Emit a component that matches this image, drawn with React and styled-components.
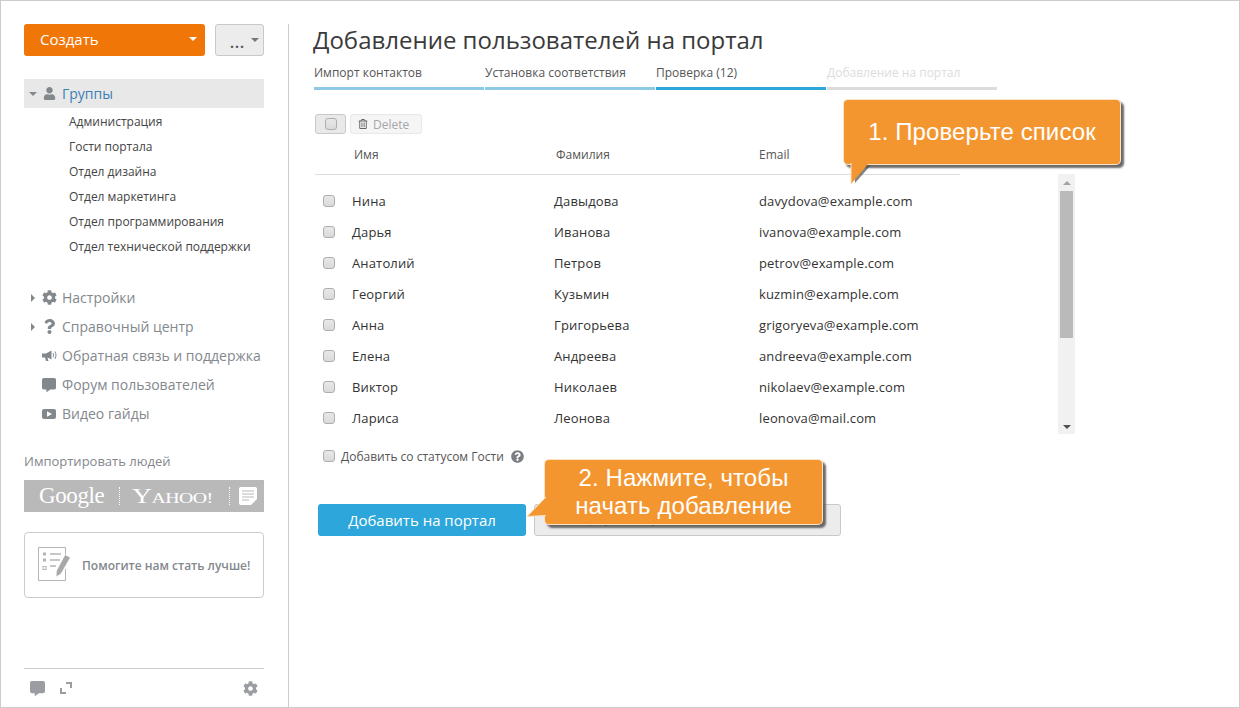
import React from "react";
import styled, { createGlobalStyle } from "styled-components";
import { FaUser, FaCog, FaQuestion, FaCommentAlt, FaQuestionCircle, FaRegTrashAlt } from "react-icons/fa";

const GlobalStyle = createGlobalStyle`
  html, body {
    margin: 0;
    padding: 0;
    background: #fff;
  }
  body {
    font-family: "Open Sans", "Liberation Sans", sans-serif;
    color: #333;
  }
  * { box-sizing: border-box; }
`;

const Page = styled.div`
  position: relative;
  display: flex;
  width: 1240px;
  height: 708px;
  overflow: hidden;
  border: 1px solid #ccc;
  background: #fff;
`;

const Sidebar = styled.aside`
  display: flex;
  flex-direction: column;
  flex: none;
  width: 288px;
  margin-top: 23px;
  padding: 0 24px 0 23px;
  border-right: 1px solid #ccc;
`;

const ButtonRow = styled.div`
  display: flex;
  justify-content: space-between;
`;

const CreateButton = styled.div`
  display: flex;
  align-items: center;
  justify-content: space-between;
  width: 181px;
  height: 32px;
  padding: 0 8px 2px 16px;
  border-radius: 3px;
  background: #f07608;
  color: #fff;
  font-size: 15px;
`;

const Caret = styled.span`
  width: 0;
  height: 0;
  border-left: 4px solid transparent;
  border-right: 4px solid transparent;
  border-top: 4px solid ${(p) => p.$color || "#fff"};
`;

const MoreButton = styled.div`
  display: flex;
  align-items: center;
  justify-content: flex-end;
  gap: 6px;
  width: 49px;
  height: 32px;
  padding-right: 4px;
  border: 1px solid #c9c9c9;
  border-radius: 3px;
  background: #ececec;
  color: #555;
  font-size: 14px;
  font-weight: 700;
  letter-spacing: 1px;
`;

const Dots = styled.span`
  position: relative;
  top: 2px;
`;

const GroupHeader = styled.div`
  display: flex;
  align-items: center;
  height: 29px;
  margin-top: 23px;
  padding-left: 5px;
  background: #e8e8e8;
  color: #3b7fb5;
  font-size: 14px;
`;

const Arrow = styled.span`
  flex: none;
  width: 0;
  height: 0;
  ${(p) =>
    p.$open
      ? `border-left: 4px solid transparent;
         border-right: 4px solid transparent;
         border-top: 4px solid #83888d;
         margin-right: 4px;`
      : `border-top: 4px solid transparent;
         border-bottom: 4px solid transparent;
         border-left: 4px solid #83888d;`}
`;

const IconSlot = styled.span`
  display: flex;
  align-items: center;
  justify-content: center;
  flex: none;
  width: 16px;
  margin-right: 5px;
  color: #83888d;
  font-size: 15px;
`;

const SubList = styled.div`
  margin-top: 1px;
`;

const SubItem = styled.div`
  height: 25px;
  padding-left: 45px;
  color: #444;
  font-size: 12px;
  line-height: 25px;
`;

const Nav = styled.div`
  margin-top: 24px;
`;

const NavItem = styled.div`
  display: flex;
  align-items: center;
  height: 29px;
  color: #83888d;
  font-size: 14px;
  white-space: nowrap;
`;

const ArrowSlot = styled.span`
  display: flex;
  align-items: center;
  flex: none;
  width: 17px;
  padding-left: 7px;
`;

const ImportLabel = styled.div`
  margin-top: 25px;
  color: #83888d;
  font-size: 13px;
  line-height: 16px;
`;

const ImportBar = styled.div`
  display: flex;
  align-items: center;
  width: 240px;
  height: 32px;
  margin-top: 11px;
  padding-left: 15px;
  background: #b9b9b9;
  color: #fff;
`;

const GoogleMark = styled.span`
  width: 66px;
  font-family: "Liberation Serif", serif;
  font-size: 23px;
  letter-spacing: -0.4px;
`;

const YahooMark = styled.span`
  width: 97px;
  margin-left: 12px;
  font-family: "Liberation Serif", serif;
  font-size: 15px;
  letter-spacing: -0.4px;
  white-space: nowrap;
  transform: scaleX(1.32);
  transform-origin: left center;
`;

const BigLetter = styled.span`
  font-size: 21px;
`;

const DotLine = styled.span`
  flex: none;
  width: 1px;
  height: 18px;
  margin-left: ${(p) => p.$left}px;
  border-left: 1px dotted #fff;
`;

const NotesSlot = styled.span`
  display: flex;
  margin-left: 9px;
`;

const FeedbackCard = styled.div`
  display: flex;
  align-items: center;
  width: 240px;
  height: 66px;
  margin-top: 20px;
  padding-left: 13px;
  border: 1px solid #ccc;
  border-radius: 4px;
  color: #83888d;
  font-size: 12px;
  font-weight: 600;
  white-space: nowrap;
`;

const CardIcon = styled.svg`
  flex: none;
  width: 33px;
  height: 36px;
  margin-right: 11px;
`;

const SidebarFooter = styled.div`
  display: flex;
  align-items: center;
  height: 39px;
  margin-top: auto;
  padding: 0 6px;
  border-top: 1px solid #ccc;
  color: #9a9ea3;
`;

const FooterIcon = styled.span`
  display: flex;
  width: ${(p) => p.$width}px;
  font-size: 15px;
`;

const Spacer = styled.span`
  flex: 1;
`;

const Main = styled.main`
  flex: 1;
  padding: 23px 0 0 24px;
`;

const Title = styled.h1`
  margin: 0;
  color: #3a3a3a;
  font-size: 24px;
  font-weight: 400;
  line-height: 32px;
`;

const Steps = styled.div`
  display: flex;
  gap: 1px;
  margin: 9px 0 0 1px;
`;

const Step = styled.div`
  width: 170px;
  padding-bottom: 6px;
  border-bottom: 3px solid ${(p) => p.$bar};
  color: ${(p) => p.$color};
  font-size: 12px;
  line-height: 16px;
`;

const Toolbar = styled.div`
  display: flex;
  gap: 4px;
  margin: 24px 0 0 2px;
`;

const SelectButton = styled.div`
  display: flex;
  align-items: center;
  justify-content: center;
  width: 31px;
  height: 20px;
  border: 1px solid #c9c9c9;
  border-radius: 3px;
  background: #e9e9e9;
`;

const DeleteButton = styled.div`
  display: flex;
  align-items: center;
  gap: 5px;
  width: 72px;
  height: 20px;
  padding-left: 7px;
  border: 1px solid #e8e8e8;
  border-radius: 3px;
  background: #f5f5f5;
  color: #a6a6a6;
  font-size: 12px;
`;

const Box = styled.span`
  display: block;
  flex: none;
  width: 12px;
  height: 12px;
  border: 1px solid #aeaeae;
  border-radius: 3px;
  background: linear-gradient(#e8e8e8, #dadada);
`;

const TableHead = styled.div`
  display: grid;
  grid-template-columns: 202px 203px 1fr;
  align-items: center;
  width: 645px;
  height: 41px;
  margin-left: 2px;
  padding: 0 0 0 39px;
  border-bottom: 1px solid #ddd;
  color: #555;
  font-size: 12px;
`;

const TableBody = styled.div`
  display: flex;
  justify-content: space-between;
  width: 760px;
  margin-left: 2px;
`;

const Rows = styled.div`
  width: 645px;
  padding-top: 10px;
`;

const Row = styled.div`
  display: grid;
  grid-template-columns: 29px 202px 205px 1fr;
  align-items: center;
  height: 31px;
  padding-left: 8px;
  color: #333;
  font-size: 13px;
  letter-spacing: 0.15px;
`;

const Scrollbar = styled.div`
  display: flex;
  flex-direction: column;
  align-items: center;
  justify-content: space-between;
  width: 17px;
  height: 260px;
  margin-top: -1px;
  padding: 7px 0 5px;
  background: #f1f1f1;
  position: relative;
`;

const ScrollArrow = styled.span`
  width: 0;
  height: 0;
  border-left: 4px solid transparent;
  border-right: 4px solid transparent;
  ${(p) => (p.$down ? "border-top: 4px solid #505050;" : "border-bottom: 4px solid #a3a3a3;")}
`;

const ScrollThumb = styled.span`
  position: absolute;
  top: 17px;
  left: 2px;
  width: 13px;
  height: 147px;
  background: #bababa;
`;

const GuestRow = styled.div`
  display: flex;
  align-items: center;
  height: 16px;
  margin: 14px 0 0 10px;
  color: #555;
  font-size: 12px;
`;

const GuestLabel = styled.span`
  margin: 0 7px 0 6px;
`;

const HelpIcon = styled.span`
  display: flex;
  color: #7b7f84;
  font-size: 13px;
`;

const Actions = styled.div`
  display: flex;
  gap: 8px;
  margin: 40px 0 0 5px;
`;

const ActionButton = styled.div`
  display: flex;
  align-items: center;
  justify-content: center;
  width: ${(p) => p.$width}px;
  height: 32px;
  border-radius: 3px;
  ${(p) =>
    p.$primary
      ? "background: #2da7db; color: #fff; font-size: 15px;"
      : "background: #ececec; color: #444; border: 1px solid #c9c9c9; font-size: 13px; padding-bottom: 5px;"}
`;

const Callout = styled.div`
  position: absolute;
  left: ${(p) => p.$left}px;
  top: ${(p) => p.$top}px;
  width: ${(p) => p.$width}px;
  height: ${(p) => p.$height}px;
  display: flex;
  align-items: center;
  justify-content: center;
  border-radius: 4px;
  background: #f49630;
  color: #fff;
  font-family: "Liberation Sans", Arial, sans-serif;
  font-size: 24px;
  line-height: 28px;
  letter-spacing: 0.1px;
  text-align: center;
  box-shadow: 0 0 0 1px #fde3c5, 3px 3px 2px 1px rgba(80, 80, 80, 0.85);
`;

const CalloutTail = styled.svg`
  position: absolute;
  left: ${(p) => p.$left}px;
  top: ${(p) => p.$top}px;
  overflow: visible;
`;

const steps = [
  { label: "Импорт контактов", bar: "#8ecae6", color: "#555" },
  { label: "Установка соответствия", bar: "#8ecae6", color: "#555" },
  { label: "Проверка (12)", bar: "#2da7db", color: "#555" },
  { label: "Добавление на портал", bar: "#dcdcdc", color: "#dcdcdc" },
];

const groups = [
  "Администрация",
  "Гости портала",
  "Отдел дизайна",
  "Отдел маркетинга",
  "Отдел программирования",
  "Отдел технической поддержки",
];

const people = [
  ["Нина", "Давыдова", "davydova@example.com"],
  ["Дарья", "Иванова", "ivanova@example.com"],
  ["Анатолий", "Петров", "petrov@example.com"],
  ["Георгий", "Кузьмин", "kuzmin@example.com"],
  ["Анна", "Григорьева", "grigoryeva@example.com"],
  ["Елена", "Андреева", "andreeva@example.com"],
  ["Виктор", "Николаев", "nikolaev@example.com"],
  ["Лариса", "Леонова", "leonova@mail.com"],
];

const VideoIcon = () => (
  <svg width="14" height="12" viewBox="0 0 14 12">
    <rect y="1" width="14" height="10" rx="2" fill="#83888d" />
    <path d="M5 3.2 10 6 5 8.8z" fill="#fff" />
  </svg>
);

const HornIcon = () => (
  <svg width="15" height="13" viewBox="0 0 15 13">
    <path d="M0 4.5h4L9.5 1.5v9L5.5 8.6l1 3.4H4L3 8.5H0z" fill="#83888d" />
    <path d="M11 4c.8 1.4.8 3 0 4.4M13 2.5c1.3 2.3 1.3 5 0 7.4" fill="none" stroke="#83888d" />
  </svg>
);

const NotesIcon = () => (
  <svg width="18" height="18" viewBox="0 0 18 18">
    <path d="M2 0h14a2 2 0 0 1 2 2v10l-6 6H2a2 2 0 0 1-2-2V2a2 2 0 0 1 2-2z" fill="#fff" />
    <path d="M3 4h12M3 7h12M3 10h12M3 13h7" stroke="#b9b9b9" strokeWidth="1.2" />
  </svg>
);

const ExpandIcon = () => (
  <svg width="12" height="12" viewBox="0 0 12 12" fill="none" stroke="#9a9ea3" strokeWidth="2">
    <path d="M6 1h5v5M1 6v5h5" />
  </svg>
);

const Checklist = () => (
  <CardIcon viewBox="0 0 33 36" fill="none" stroke="#b5b5b5">
    <path d="M27.5 9V.5H.5v33h27V22" />
    <path d="M5 7h3M5 13h3" strokeWidth="3" />
    <rect x="5" y="19.5" width="3" height="3" />
    <path d="M12 7h11M12 13h10M12 19h6" strokeWidth="1.5" />
    <path d="M27 7.5l5.5 3L23 27l-5 3 .3-6z" fill="#a8a8a8" stroke="#fff" strokeWidth="0.8" />
  </CardIcon>
);

const App = () => (
  <>
    <GlobalStyle />
    <Page>
      <Sidebar>
        <ButtonRow>
          <CreateButton>
            Создать
            <Caret />
          </CreateButton>
          <MoreButton>
            <Dots>...</Dots>
            <Caret $color="#777" />
          </MoreButton>
        </ButtonRow>
        <GroupHeader>
          <Arrow $open />
          <IconSlot>
            <FaUser size={13} />
          </IconSlot>
          Группы
        </GroupHeader>
        <SubList>
          {groups.map((g) => (
            <SubItem key={g}>{g}</SubItem>
          ))}
        </SubList>
        <Nav>
          <NavItem>
            <ArrowSlot><Arrow /></ArrowSlot>
            <IconSlot><FaCog /></IconSlot>
            Настройки
          </NavItem>
          <NavItem>
            <ArrowSlot><Arrow /></ArrowSlot>
            <IconSlot><FaQuestion /></IconSlot>
            Справочный центр
          </NavItem>
          <NavItem>
            <ArrowSlot />
            <IconSlot><HornIcon /></IconSlot>
            Обратная связь и поддержка
          </NavItem>
          <NavItem>
            <ArrowSlot />
            <IconSlot><FaCommentAlt size={14} /></IconSlot>
            Форум пользователей
          </NavItem>
          <NavItem>
            <ArrowSlot />
            <IconSlot><VideoIcon /></IconSlot>
            Видео гайды
          </NavItem>
        </Nav>
        <ImportLabel>Импортировать людей</ImportLabel>
        <ImportBar>
          <GoogleMark>Google</GoogleMark>
          <DotLine $left={14} />
          <YahooMark>
            <BigLetter>Y</BigLetter>AHOO!
          </YahooMark>
          <DotLine $left={0} />
          <NotesSlot>
            <NotesIcon />
          </NotesSlot>
        </ImportBar>
        <FeedbackCard>
          <Checklist />
          Помогите нам стать лучше!
        </FeedbackCard>
        <SidebarFooter>
          <FooterIcon $width={30}><FaCommentAlt /></FooterIcon>
          <FooterIcon $width={20}><ExpandIcon /></FooterIcon>
          <Spacer />
          <FooterIcon $width={15}><FaCog /></FooterIcon>
        </SidebarFooter>
      </Sidebar>
      <Main>
        <Title>Добавление пользователей на портал</Title>
        <Steps>
          {steps.map((s) => (
            <Step key={s.label} $bar={s.bar} $color={s.color}>
              {s.label}
            </Step>
          ))}
        </Steps>
        <Toolbar>
          <SelectButton>
            <Box />
          </SelectButton>
          <DeleteButton>
            <FaRegTrashAlt size={10} color="#666" />
            Delete
          </DeleteButton>
        </Toolbar>
        <TableHead>
          <span>Имя</span>
          <span>Фамилия</span>
          <span>Email</span>
        </TableHead>
        <TableBody>
          <Rows>
            {people.map(([first, last, email]) => (
              <Row key={email}>
                <Box />
                <span>{first}</span>
                <span>{last}</span>
                <span>{email}</span>
              </Row>
            ))}
          </Rows>
          <Scrollbar>
            <ScrollArrow />
            <ScrollThumb />
            <ScrollArrow $down />
          </Scrollbar>
        </TableBody>
        <GuestRow>
          <Box />
          <GuestLabel>Добавить со статусом Гости</GuestLabel>
          <HelpIcon>
            <FaQuestionCircle />
          </HelpIcon>
        </GuestRow>
        <Actions>
          <ActionButton $primary $width={208}>Добавить на портал</ActionButton>
          <ActionButton $width={307}>Вернуться к установке соответствия</ActionButton>
        </Actions>
      </Main>
      <Callout $left={843} $top={99} $width={276} $height={64}>
        1. Проверьте список
        <CalloutTail $left={5} $top={63} width="22" height="22" viewBox="0 0 22 22">
          <path d="M20 1 4 19 3 1z" fill="#505050" opacity="0.7" transform="translate(2 1)" />
          <path d="M20 0 2 21 2 0z" fill="#f49630" />
          <path d="M2 0v21" stroke="#fde3c5" />
        </CalloutTail>
      </Callout>
      <Callout $left={544} $top={459} $width={277} $height={64}>
        2. Нажмите, чтобы
        <br />
        начать добавление
        <CalloutTail $left={-18} $top={37} width="20" height="22" viewBox="0 0 20 22">
          <path d="M19 0 0 19.5l19-1z" fill="#f49630" />
          <path d="M19 0 0 19.5l19-1" fill="none" stroke="#fde3c5" />
        </CalloutTail>
      </Callout>
    </Page>
  </>
);

export default App;
